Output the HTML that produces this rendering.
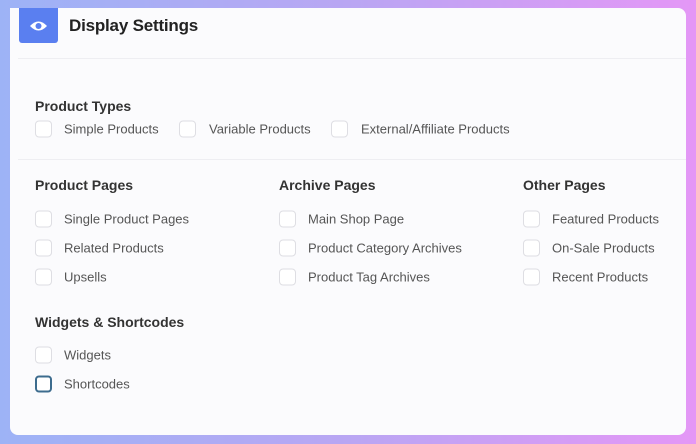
<!DOCTYPE html>
<html><head><style>
*{margin:0;padding:0;box-sizing:border-box}
body{width:696px;height:444px;overflow:hidden;background:linear-gradient(90deg,#9db3f6 0%,#b9a6f3 50%,#e497f6 100%);font-family:"Liberation Sans",sans-serif;position:relative}
.card{position:absolute;left:10px;top:8px;width:676px;height:427px;background:#fbfbfd;border-radius:0 8px 8px 8px}
.ic{position:absolute;left:19px;top:8px;width:39px;height:35px;background:#5a7ff0;border-radius:0 0 3px 3px}
.t{position:absolute;white-space:nowrap;transform:translateY(-50%)}
.h1{font-size:17px;color:#222;font-weight:bold;left:69px;top:26px;letter-spacing:-.2px}
.h{font-size:14px;color:#333;font-weight:bold}
.l{font-size:13px;color:#555}
.cb{position:absolute;width:17px;height:17px;border:1.5px solid #dedee3;border-radius:4px;background:#fff;transform:translateY(-50%)}
.line{position:absolute;left:18px;width:668px;height:1px;background:#eeeef2}
</style></head><body>
<div class="card"></div>
<div class="ic"><svg width="39" height="35" viewBox="0 0 39 35"><path d="M11 18 Q19.5 9 28 18 Q19.5 27 11 18Z" fill="#fff"/><circle cx="19.5" cy="18" r="3" fill="#5a7ff0"/></svg></div>
<div class="t h1">Display Settings</div>
<div class="line" style="top:58px"></div>
<div class="line" style="top:159px"></div>

<div class="t h" style="left:35px;top:106px">Product Types</div>
<div class="cb" style="left:35px;top:129px"></div><div class="t l" style="left:64px;top:129px">Simple Products</div>
<div class="cb" style="left:179px;top:129px"></div><div class="t l" style="left:209px;top:129px">Variable Products</div>
<div class="cb" style="left:331px;top:129px"></div><div class="t l" style="left:361px;top:129px">External/Affiliate Products</div>

<div class="t h" style="left:35px;top:185px">Product Pages</div>
<div class="cb" style="left:35px;top:219px"></div><div class="t l" style="left:64px;top:219px">Single Product Pages</div>
<div class="cb" style="left:35px;top:248px"></div><div class="t l" style="left:64px;top:248px">Related Products</div>
<div class="cb" style="left:35px;top:277px"></div><div class="t l" style="left:64px;top:277px">Upsells</div>

<div class="t h" style="left:279px;top:185px">Archive Pages</div>
<div class="cb" style="left:279px;top:219px"></div><div class="t l" style="left:308px;top:219px">Main Shop Page</div>
<div class="cb" style="left:279px;top:248px"></div><div class="t l" style="left:308px;top:248px">Product Category Archives</div>
<div class="cb" style="left:279px;top:277px"></div><div class="t l" style="left:308px;top:277px">Product Tag Archives</div>

<div class="t h" style="left:523px;top:185px">Other Pages</div>
<div class="cb" style="left:523px;top:219px"></div><div class="t l" style="left:552px;top:219px">Featured Products</div>
<div class="cb" style="left:523px;top:248px"></div><div class="t l" style="left:552px;top:248px">On-Sale Products</div>
<div class="cb" style="left:523px;top:277px"></div><div class="t l" style="left:552px;top:277px">Recent Products</div>

<div class="t h" style="left:35px;top:322px">Widgets &amp; Shortcodes</div>
<div class="cb" style="left:35px;top:355px"></div><div class="t l" style="left:64px;top:355px">Widgets</div>
<div class="cb" style="left:35px;top:384px;border:2px solid #3d6c8e"></div><div class="t l" style="left:64px;top:384px">Shortcodes</div>
</body></html>
